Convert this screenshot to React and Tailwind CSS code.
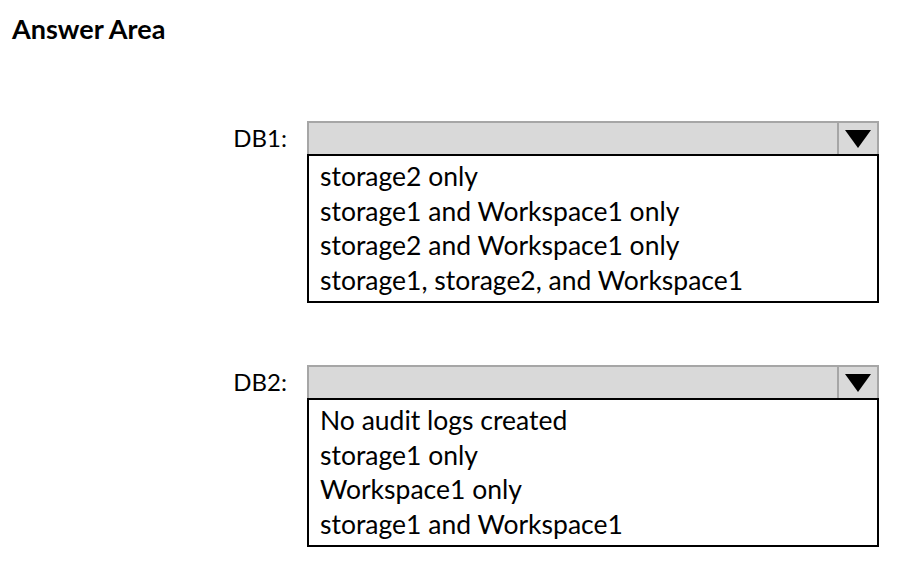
import React from "react";

const font = { fontFamily: "Lato, 'Open Sans', sans-serif" };

function DropDown({ label, options }) {
  return (
    <div className="flex items-start">
      <div className="w-[287px] h-[34px] text-right text-[24px] leading-[34px] text-black">
        {label}
      </div>
      <div className="ml-[20px] w-[572px]">
        {/* closed select bar */}
        <div className="flex h-[33px] border-2 border-b-0 border-[#a6a6a6] bg-[#d9d9d9]">
          <div className="flex-1" />
          <div className="w-[40px] border-l-2 border-[#a6a6a6] flex items-center justify-center">
            <svg width="26" height="18" viewBox="0 0 26 18">
              <polygon points="0,0 26,0 13,18" fill="#000" />
            </svg>
          </div>
        </div>
        {/* options */}
        <div className="border-2 border-black bg-white pl-[11px] pt-[3px] pb-[4px]">
          {options.map((o) => (
            <div key={o} className="text-[26.5px] leading-[34.5px] text-black whitespace-nowrap">
              {o}
            </div>
          ))}
        </div>
      </div>
    </div>
  );
}

export default function App() {
  return (
    <div className="w-[898px] h-[568px] bg-white" style={font}>
      <div className="pl-[12px] pt-[13px] text-[27px] leading-[32px] font-bold text-black">
        Answer Area
      </div>
      <div className="mt-[76px]">
        <DropDown
          label="DB1:"
          options={[
            "storage2 only",
            "storage1 and Workspace1 only",
            "storage2 and Workspace1 only",
            "storage1, storage2, and Workspace1",
          ]}
        />
      </div>
      <div className="mt-[62px]">
        <DropDown
          label="DB2:"
          options={[
            "No audit logs created",
            "storage1 only",
            "Workspace1 only",
            "storage1 and Workspace1",
          ]}
        />
      </div>
    </div>
  );
}
